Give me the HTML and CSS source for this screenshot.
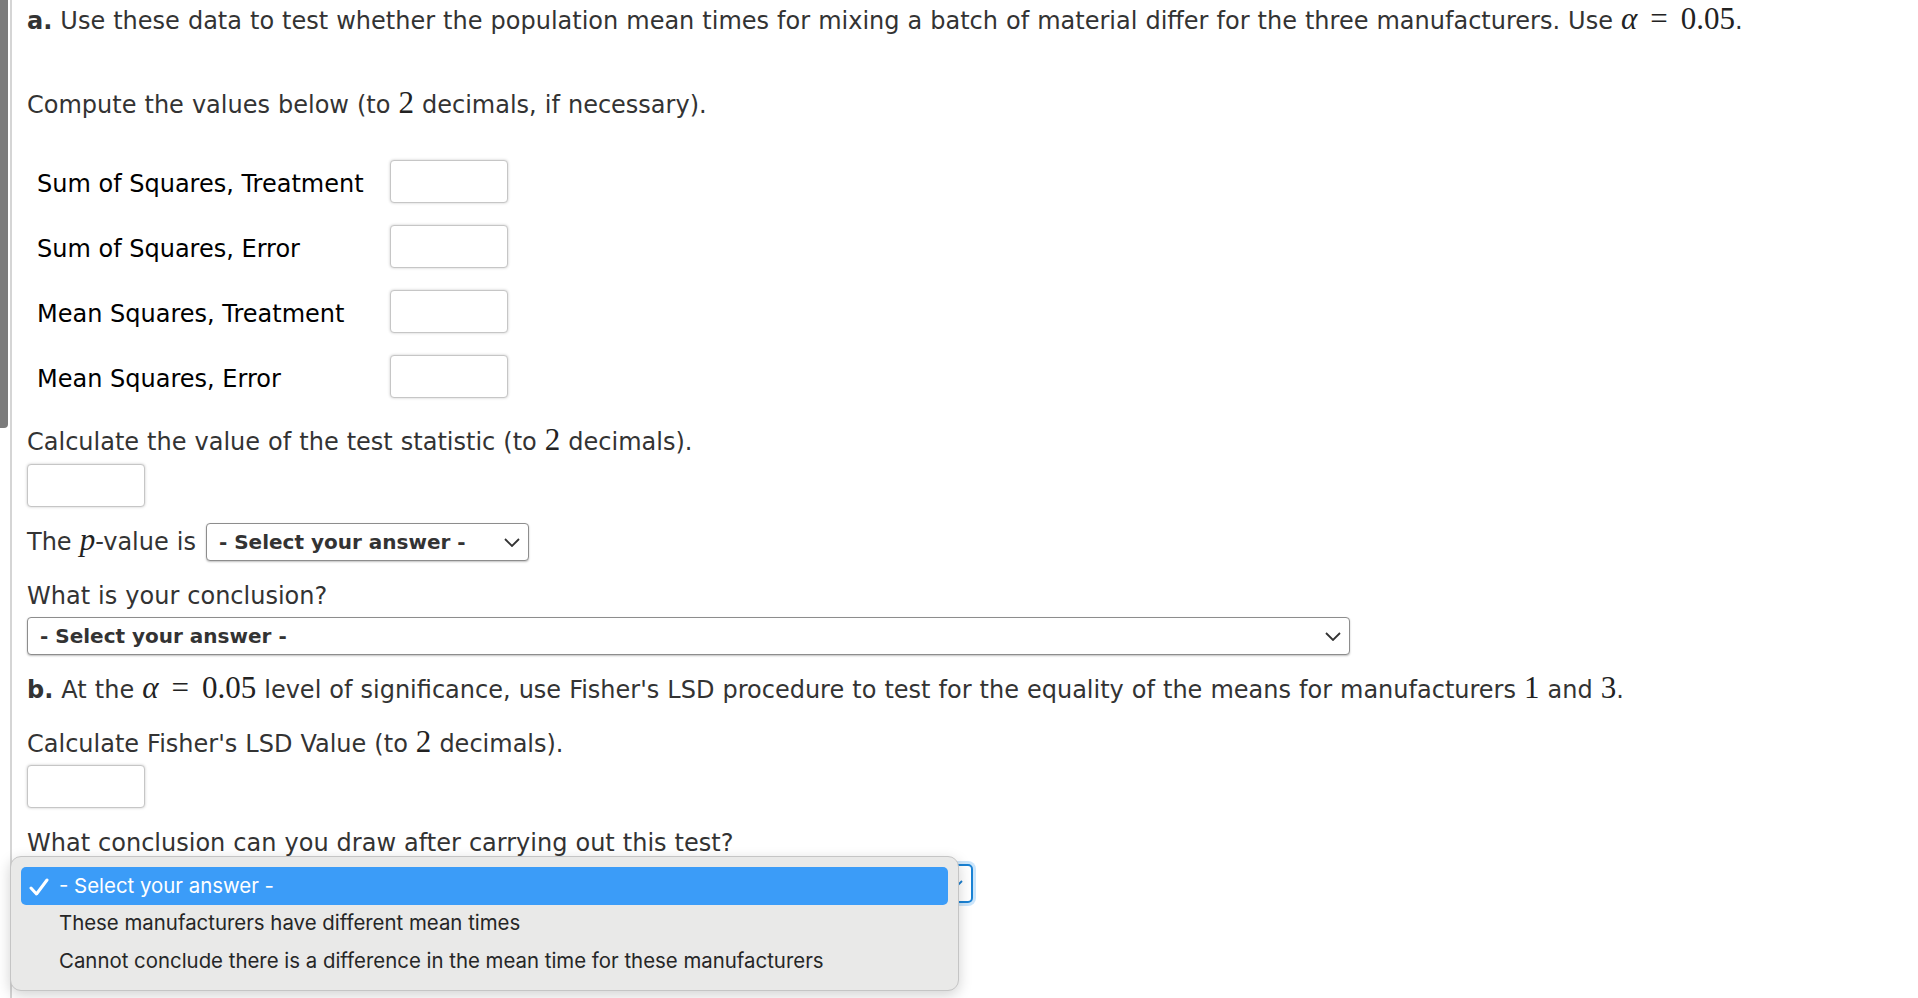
FILE: index.html
```html
<!DOCTYPE html>
<html lang="en">
<head>
<meta charset="utf-8">
<title>ANOVA question</title>
<link rel="stylesheet" href="styles.css">
</head>
<body>
<div class="side-bar"></div>
<main class="page">
  <p class="line l1"><b>a.</b> Use these data to test whether the population mean times for mixing a batch of material differ for the three manufacturers. Use <span class="math"><i>α</i><span class="eq">=</span>0.05</span>.</p>
  <p class="line l2">Compute the values below (to <span class="math">2</span> decimals, if necessary).</p>
  <div class="grid">
    <span class="lbl">Sum of Squares, Treatment</span><input class="box" type="text">
    <span class="lbl">Sum of Squares, Error</span><input class="box" type="text">
    <span class="lbl">Mean Squares, Treatment</span><input class="box" type="text">
    <span class="lbl">Mean Squares, Error</span><input class="box" type="text">
  </div>
  <p class="line l3">Calculate the value of the test statistic (to <span class="math">2</span> decimals).</p>
  <input class="box solo s1" type="text">
  <div class="prow">
    <span class="line">The <span class="math"><i>p</i></span>-value is</span>
    <div class="sel sel-p">
      <span class="sel-text">- Select your answer -</span>
      <svg class="chev" width="16" height="9" viewBox="0 0 16 9"><path d="M1 1 L8 8 L15 1" fill="none" stroke="#333" stroke-width="1.8"/></svg>
    </div>
  </div>
  <p class="line l4">What is your conclusion?</p>
  <div class="sel sel-wide">
    <span class="sel-text">- Select your answer -</span>
    <svg class="chev" width="16" height="9" viewBox="0 0 16 9"><path d="M1 1 L8 8 L15 1" fill="none" stroke="#333" stroke-width="1.8"/></svg>
  </div>
  <p class="line l5"><b>b.</b> At the <span class="math"><i>α</i><span class="eq">=</span>0.05</span> level of significance, use Fisher's LSD procedure to test for the equality of the means for manufacturers <span class="math">1</span> and <span class="math">3</span>.</p>
  <p class="line l6">Calculate Fisher's LSD Value (to <span class="math">2</span> decimals).</p>
  <input class="box solo s2" type="text">
  <p class="line l7">What conclusion can you draw after carrying out this test?</p>
  <div class="sel sel-focus">
    <span class="sel-text hidden-text">- Select your answer -</span>
    <svg class="chev" width="16" height="9" viewBox="0 0 16 9"><path d="M1 1 L8 8 L15 1" fill="none" stroke="#1a7fd0" stroke-width="1.8"/></svg>
    <div class="menu">
      <div class="opt active">
        <svg class="check" width="20" height="18" viewBox="0 0 20 18"><path d="M2 10 L7.5 16 L18 2" fill="none" stroke="#fff" stroke-width="3" stroke-linecap="round" stroke-linejoin="round"/></svg>
        <span>- Select your answer -</span>
      </div>
      <div class="opt"><span>These manufacturers have different mean times</span></div>
      <div class="opt"><span>Cannot conclude there is a difference in the mean time for these manufacturers</span></div>
    </div>
  </div>
</main>
</body>
</html>
```

FILE: styles.css
```css
html, body {
  margin: 0;
  padding: 0;
  background: #ffffff;
}
body {
  font-family: "DejaVu Sans", Verdana, sans-serif;
  font-size: 24px;
  line-height: 32px;
  color: #333333;
  overflow: hidden;
  height: 998px;
  position: relative;
}
.side-bar {
  position: absolute;
  left: 0;
  top: 0;
  width: 8px;
  height: 428px;
  background: #7b7b7b;
  border-radius: 0 0 4px 0;
}
.page {
  margin-left: 10px;
  border-left: 2px solid #d5d5d5;
  padding-left: 15px;
  height: 998px;
  box-sizing: border-box;
  display: flex;
  flex-direction: column;
  align-items: flex-start;
}
.line {
  margin: 0;
  white-space: nowrap;
  word-spacing: 0.4px;
}
.math {
  font-family: "Liberation Serif", "DejaVu Serif", serif;
  font-size: 31px;
  line-height: 0;
  color: #222;
  word-spacing: 0;
}
.math i {
  font-style: italic;
}
.eq {
  margin: 0 13px;
}
.l1 { margin-top: 5px; }
.l2 { margin-top: 52px; }
.grid {
  margin-top: 39px;
  display: grid;
  grid-template-columns: 353px 118px;
  row-gap: 22px;
  align-items: center;
  padding-left: 10px;
}
.lbl {
  color: #000;
  white-space: nowrap;
  padding-top: 5px;
}
.box {
  width: 118px;
  height: 43px;
  box-sizing: border-box;
  border: 1px solid #c6c6c6;
  border-radius: 4px;
  box-shadow: 0 0 3px rgba(0, 0, 0, 0.22);
  background: #fff;
  margin: 0;
  padding: 0;
  font: inherit;
}
.l3 { margin-top: 28px; }
.s1 { margin-top: 6px; }
.prow {
  margin-top: 16px;
  display: flex;
  align-items: center;
  gap: 10px;
}
.sel {
  position: relative;
  height: 38px;
  box-sizing: border-box;
  border: 1px solid #8d8d8d;
  border-radius: 4px;
  box-shadow: 0 1px 2px rgba(0, 0, 0, 0.25);
  background: #fff;
  display: flex;
  align-items: center;
  padding-left: 12px;
}
.sel-text {
  font-weight: bold;
  font-size: 20px;
  color: #333;
  white-space: nowrap;
}
.hidden-text {
  visibility: hidden;
}
.chev {
  position: absolute;
  right: 8px;
  top: 14px;
}
.sel-p { width: 323px; }
.l4 { margin-top: 19px; }
.sel-wide {
  width: 1323px;
  margin-top: 5px;
}
.l5 { margin-top: 19px; }
.l6 { margin-top: 22px; }
.s2 { margin-top: 5px; }
.l7 { margin-top: 19px; }
.sel-focus {
  width: 946px;
  height: 39px;
  margin-top: 5px;
  border: 2px solid #1a82d4;
  border-radius: 5px;
  box-shadow: 0 0 0 3px rgba(110, 180, 240, 0.35);
}
.menu {
  position: absolute;
  left: -19px;
  top: -10px;
  width: 949px;
  height: 135px;
  box-sizing: border-box;
  background: #e9e9e8;
  border: 1px solid #c5c5c5;
  border-radius: 11px;
  box-shadow: 0 4px 14px rgba(0, 0, 0, 0.18);
  padding: 10px 10px 0 10px;
  font-family: Inter, "Liberation Sans", sans-serif;
  font-size: 20.4px;
  color: #262626;
}
.opt {
  height: 37.5px;
  display: flex;
  align-items: center;
  padding-left: 38px;
  position: relative;
  border-radius: 5px;
  white-space: nowrap;
}
.opt.active {
  background: #3b9cf8;
  color: #fff;
}
.check {
  position: absolute;
  left: 8px;
  top: 11px;
}
```
